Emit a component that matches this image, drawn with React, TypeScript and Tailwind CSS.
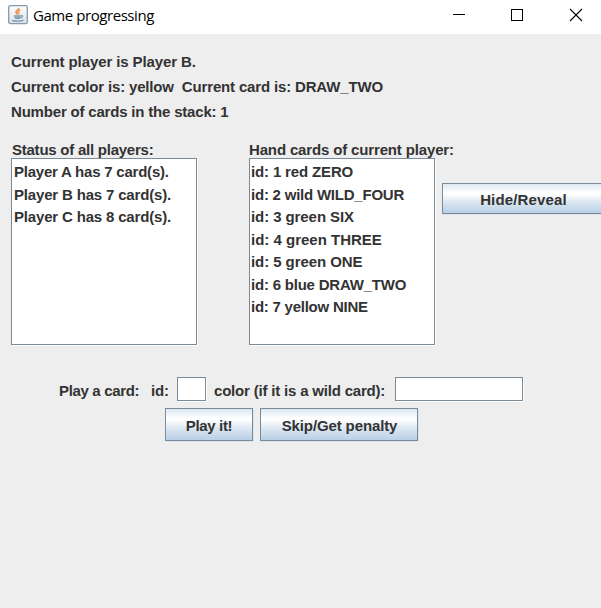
import type { ReactNode } from "react";

type Row = { text: string; tracking: string };

const players: Row[] = [
  { text: "Player A has 7 card(s).", tracking: "tracking-[-0.22px]" },
  { text: "Player B has 7 card(s).", tracking: "tracking-[-0.17px]" },
  { text: "Player C has 8 card(s).", tracking: "tracking-[-0.17px]" },
];

const cards: Row[] = [
  { text: "id: 1 red ZERO", tracking: "tracking-[-0.15px]" },
  { text: "id: 2 wild WILD_FOUR", tracking: "tracking-[-0.22px]" },
  { text: "id: 3 green SIX", tracking: "tracking-[-0.08px]" },
  { text: "id: 4 green THREE", tracking: "tracking-[0px]" },
  { text: "id: 5 green ONE", tracking: "tracking-[-0.07px]" },
  { text: "id: 6 blue DRAW_TWO", tracking: "tracking-[-0.21px]" },
  { text: "id: 7 yellow NINE", tracking: "tracking-[-0.24px]" },
];

function JavaIcon() {
  return (
    <svg width="20" height="20" viewBox="0 0 20 20" fill="none">
      <defs>
        <linearGradient id="tile" x1="0" y1="0" x2="0" y2="1">
          <stop offset="0" stopColor="#ffffff" />
          <stop offset="1" stopColor="#dcdfe2" />
        </linearGradient>
      </defs>
      <rect x="0.7" y="0.7" width="18.6" height="17.9" rx="1.6" fill="url(#tile)" stroke="#8499ab" strokeWidth="1.300" />
      <path d="M10.700 2.800c.8 1.700-2.800 2.400-2.700 4.200.1 1.100 1.300 1.500 1.500 2.500M12.300 5c-1.500.7-2.600 1.600-1.900 2.600.4.600.3 1.100-.1 1.700" stroke="#e99a5c" strokeWidth="1.700" />
      <path d="M6 10.200h7.200c-.1 1.900-.9 3.300-1.800 3.800H7.800C6.800 13.500 6.100 12 6 10.200z" fill="#7397b0" />
      <path d="M6.500 12h6" stroke="#c2d0da" strokeWidth=".7" />
      <path d="M13.200 10.500c2-.3 2 1.900-.7 2.400" stroke="#7397b0" strokeWidth="1.100" />
      <path d="M4.200 15.300c3 1.100 8.500 1.100 11.300-.1" stroke="#7397b0" strokeWidth="1.400" />
    </svg>
  );
}

function ListBox({ items, className }: { items: Row[]; className: string }) {
  return (
    <ul className={`h-[187px] w-full border border-[#7a8a99] bg-white pt-[2px] shadow-[1px_1px_0_#fff] ${className}`}>
      {items.map((item) => (
        <li key={item.text} className={`h-[22.5px] whitespace-pre leading-[22.5px] ${item.tracking}`}>
          {item.text}
        </li>
      ))}
    </ul>
  );
}

function MetalButton({ className, children }: { className: string; children: ReactNode }) {
  return (
    <button
      className={`shrink-0 whitespace-nowrap border border-[#7a8a99] bg-[linear-gradient(to_bottom,#dde8f3_0%,#ffffff_30%,#ffffff_34%,#dce7f2_62%,#b8cfe5_100%)] pt-[3px] text-center shadow-[1px_1px_0_#dae5ef] ${className}`}
    >
      {children}
    </button>
  );
}

function TextField({ className }: { className: string }) {
  return (
    <input
      type="text"
      className={`h-6 shrink-0 border border-[#7a8a99] bg-white px-1 shadow-[1px_1px_0_#fff] outline-none ${className}`}
    />
  );
}

export default function App() {
  return (
    <div className="flex h-[608px] w-[601px] flex-col overflow-hidden bg-[#eeeeee] font-['Liberation_Sans',Arial,sans-serif] text-[15px] font-bold text-[#333333]">
      <header className="flex h-[34px] shrink-0 items-start bg-white pl-2 text-black">
        <div className="mt-[5px]">
          <JavaIcon />
        </div>
        <h1 className="ml-[5px] mt-[3px] grow whitespace-nowrap font-['Open_Sans','Noto_Sans',sans-serif] text-[15px] font-normal leading-6 tracking-[-0.44px]">
          Game progressing
        </h1>
        <svg className="mt-2" width="149" height="14" fill="none" stroke="#000" shapeRendering="crispEdges">
          <path d="M1 6.500h12M59.500 1.500h11v11h-11z" />
          <path d="M118 1l12 12M130 1l-12 12" shapeRendering="auto" strokeWidth="1.100" />
        </svg>
      </header>

      <section className="ml-[11px] mt-[15px] flex flex-col whitespace-pre leading-[25px]">
        <p className="tracking-[-0.1px]">Current player is Player B.</p>
        <p className="tracking-[-0.16px]">Current color is: yellow  Current card is: DRAW_TWO</p>
        <p className="tracking-[-0.19px]">Number of cards in the stack: 1</p>
      </section>

      <section className="ml-[11px] mt-[17px] flex items-start">
        <div className="w-[186px] shrink-0">
          <h2 className="h-[17px] whitespace-nowrap pl-px leading-[17px] tracking-[-0.24px]">Status of all players:</h2>
          <ListBox items={players} className="pl-[2px]" />
        </div>
        <div className="ml-[52px] w-[186px] shrink-0">
          <h2 className="h-[17px] whitespace-nowrap leading-[17px] tracking-[-0.15px]">Hand cards of current player:</h2>
          <ListBox items={cards} className="pl-px" />
        </div>
        <MetalButton className="ml-[7px] mt-[42px] h-[31px] w-[163px] tracking-[0.15px]">Hide/Reveal</MetalButton>
      </section>

      <section className="mt-8 flex h-6 shrink-0 items-center whitespace-nowrap pl-[59px] leading-6">
        <span className="w-[92px] shrink-0 pt-1 tracking-[-0.33px]">Play a card:</span>
        <span className="w-[26px] shrink-0 pt-1 tracking-[-0.2px]">id:</span>
        <TextField className="w-[29px]" />
        <span className="ml-2 w-[181px] shrink-0 pt-1 tracking-[-0.19px]">color (if it is a wild card):</span>
        <TextField className="w-[128px]" />
      </section>

      <section className="mt-[7px] flex gap-[7px] pl-[165px]">
        <MetalButton className="h-[33px] w-[88px] tracking-[-0.35px]">Play it!</MetalButton>
        <MetalButton className="h-[33px] w-[158px] pl-px tracking-[-0.12px]">Skip/Get penalty</MetalButton>
      </section>
    </div>
  );
}
